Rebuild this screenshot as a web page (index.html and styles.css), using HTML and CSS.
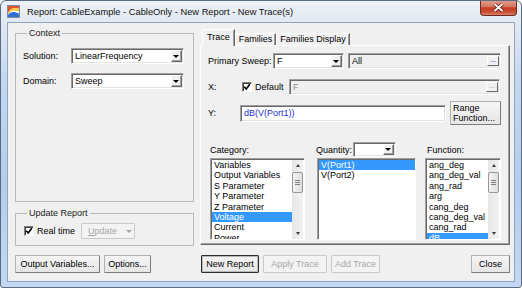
FILE: index.html
```html
<!DOCTYPE html>
<html lang="en">
<head>
    <meta charset="UTF-8">
    <title>Report: CableExample - CableOnly - New Report - New Trace(s)</title>
    <link rel="stylesheet" href="styles.css">
</head>
<body>
<div class="window">
    <div class="titlebar">
        <svg class="app-icon" width="13" height="13" viewBox="0 0 13 13">
            <rect x="0.5" y="0.5" width="12" height="12" fill="#fff" stroke="#7d8ea3"/>
            <path d="M1 8.5 C3 3.5 6 2 12 3.5 L12 1 L1 1 Z" fill="#e4502c"/>
            <path d="M1 10 C3 5.5 7 4.5 12 6.5 L12 3.5 C6 2 3 3.5 1 8.5 Z" fill="#f5c635"/>
            <path d="M1 12 L1 10 C3 6.5 7 6 12 8.5 L12 12 Z" fill="#2f6fd6"/>
        </svg>
        <span class="title">Report: CableExample - CableOnly - New Report - New Trace(s)</span>
        <div class="close-btn">
            <svg width="11" height="9" viewBox="0 0 11 9">
                <path d="M1.5 1 L9.5 8 M9.5 1 L1.5 8" stroke="#5a1d14" stroke-width="3.4"/>
                <path d="M1.5 1 L9.5 8 M9.5 1 L1.5 8" stroke="#fff" stroke-width="1.8"/>
            </svg>
        </div>
    </div>

    <div class="client">
        <!-- left side: context + update -->
        <div class="left-col">
            <fieldset class="group context">
                <legend>Context</legend>
                <div class="field-row">
                    <span class="lbl w-ctx">Solution:</span>
                    <div class="combo ctx-combo"><span class="combo-text">LinearFrequency</span><span class="combo-btn"></span></div>
                </div>
                <div class="field-row">
                    <span class="lbl w-ctx">Domain:</span>
                    <div class="combo ctx-combo"><span class="combo-text">Sweep</span><span class="combo-btn"></span></div>
                </div>
            </fieldset>

            <fieldset class="group update">
                <legend>Update Report</legend>
                <div class="field-row realtime-row">
                    <span class="check on"><svg width="8" height="8" viewBox="0 0 8 8"><polyline points="1.2,3.8 3.2,6 6.8,1.3" fill="none" stroke="#000" stroke-width="1.7"/></svg></span>
                    <span class="check-lbl w-real">Real time</span>
                    <div class="btn disabled update-btn"><span><u>U</u>pdate</span><span class="tri grey"></span></div>
                </div>
            </fieldset>

            <div class="btn-row">
                <button class="btn w-outvars">Output Variables...</button>
                <button class="btn w-options">Options...</button>
            </div>
        </div>

        <!-- right side: trace tabs -->
        <div class="right-col">
            <div class="tabs">
                <div class="tab active">Trace</div>
                <div class="tab">Families</div>
                <div class="tab">Families Display</div>
            </div>
            <div class="tab-panel">
                <div class="row sweep-row">
                    <span class="lbl w-sweep">Primary Sweep:</span>
                    <div class="combo sweep-combo"><span class="combo-text">F</span><span class="combo-btn"></span></div>
                    <div class="edit disabled all-field"><span class="edit-text">All</span><span class="dots-btn">...</span></div>
                </div>
                <div class="row x-row">
                    <span class="lbl w-x">X:</span>
                    <span class="check on"><svg width="8" height="8" viewBox="0 0 8 8"><polyline points="1.2,3.8 3.2,6 6.8,1.3" fill="none" stroke="#000" stroke-width="1.7"/></svg></span>
                    <span class="check-lbl w-default">Default</span>
                    <div class="edit disabled x-field"><span class="edit-text grey">F</span><span class="dots-btn off">...</span></div>
                </div>
                <div class="row y-row">
                    <span class="lbl w-y">Y:</span>
                    <div class="edit y-field"><span class="edit-text blue">dB(V(Port1))</span></div>
                    <button class="btn range-btn">Range<br>Function...</button>
                </div>

                <div class="lists">
                    <div class="list-col cat-col">
                        <div class="list-head">Category:</div>
                        <div class="listbox">
                            <ul class="items">
                                <li>Variables</li>
                                <li>Output Variables</li>
                                <li>S Parameter</li>
                                <li>Y Parameter</li>
                                <li>Z Parameter</li>
                                <li class="sel">Voltage</li>
                                <li>Current</li>
                                <li>Power</li>
                            </ul>
                            <div class="vscroll">
                                <div class="sb-arrow up"></div>
                                <div class="sb-track"><div class="thumb"></div></div>
                                <div class="sb-arrow down"></div>
                            </div>
                        </div>
                    </div>
                    <div class="list-col qty-col">
                        <div class="list-head">
                            <span class="w-qty">Quantity:</span>
                            <div class="combo qty-combo"><span class="combo-text"></span><span class="combo-btn"></span></div>
                        </div>
                        <div class="listbox">
                            <ul class="items">
                                <li class="sel">V(Port1)</li>
                                <li>V(Port2)</li>
                            </ul>
                        </div>
                    </div>
                    <div class="list-col fn-col">
                        <div class="list-head fn-head">Function:</div>
                        <div class="listbox">
                            <ul class="items">
                                <li>ang_deg</li>
                                <li>ang_deg_val</li>
                                <li>ang_rad</li>
                                <li>arg</li>
                                <li>cang_deg</li>
                                <li>cang_deg_val</li>
                                <li>cang_rad</li>
                                <li class="sel">dB</li>
                            </ul>
                            <div class="vscroll">
                                <div class="sb-arrow up"></div>
                                <div class="sb-track"><div class="thumb"></div></div>
                                <div class="sb-arrow down"></div>
                            </div>
                        </div>
                    </div>
                </div>
            </div>

            <div class="btn-row">
                <button class="btn default w-newrep">New Report</button>
                <button class="btn disabled w-apply">Apply Trace</button>
                <button class="btn disabled w-add">Add Trace</button>
                <button class="btn w-close">Close</button>
            </div>
        </div>
    </div>
</div>
</body>
</html>
```

FILE: styles.css
```css
* {
    margin: 0;
    padding: 0;
    box-sizing: border-box;
}

body {
    font-family: "Liberation Sans", Arial, sans-serif;
    font-size: 9px;
    color: #000;
    background: #fff;
}

.window {
    width: 522px;
    height: 288px;
    border: 1px solid #5b6b80;
    border-radius: 6px 6px 3px 3px;
    background: linear-gradient(#eef1f6 0, #e2e9f2 20px, #c3d7f0 80px, #b4cdee 180px, #c2d8f3 288px);
    display: flex;
    flex-direction: column;
    overflow: hidden;
}

/* title bar */
.titlebar {
    height: 21px;
    display: flex;
    align-items: center;
}

.app-icon {
    margin-left: 6px;
    flex: none;
}

.title {
    margin-left: 7px;
    font-size: 9.3px;
    color: #111;
    white-space: nowrap;
}

.close-btn {
    width: 37px;
    height: 16px;
    margin: -1px 4px 0 auto;
    align-self: flex-start;
    border: 1px solid #6b2a22;
    border-top: none;
    border-radius: 0 0 4px 4px;
    background: linear-gradient(#e3a293 0, #d6755f 45%, #c23d23 52%, #c84e34 80%, #da866c 100%);
    display: flex;
    align-items: center;
    justify-content: center;
}

/* client area */
.client {
    margin: 0 6px;
    height: 260px;
    border: 1px solid #92a4ba;
    background: #f0f0f0;
    display: flex;
    padding-left: 7px;
}

.left-col {
    width: 179px;
    padding-top: 5px;
    display: flex;
    flex-direction: column;
}

.right-col {
    width: 310px;
    margin-left: 6px;
    padding-top: 6px;
    display: flex;
    flex-direction: column;
}

/* group boxes */
.group {
    border: 1px solid #b9b9b9;
    padding: 0 8px 0 7px;
    min-width: 0;
}

.group legend {
    margin-left: 4px;
    padding: 0 2px;
    line-height: 11px;
    color: #1a1a1a;
}

.context {
    height: 174px;
}

.update {
    height: 38px;
    margin-top: 6px;
}

.field-row {
    display: flex;
    align-items: center;
    height: 16px;
    margin-top: 9px;
}

.realtime-row {
    margin-top: 4px;
    padding-left: 1px;
}

.lbl {
    flex: none;
    white-space: nowrap;
}

.w-ctx { width: 48px; }
.ctx-combo { width: 113px; }

/* combo boxes and edits */
.combo, .edit {
    display: flex;
    align-items: center;
    height: 16px;
    background: #fff;
    border: 1px solid;
    border-color: #a0a0a0 #fff #fff #a0a0a0;
    box-shadow: inset 1px 1px 0 #696969, inset -1px -1px 0 #e3e3e3;
    flex: none;
}

.combo-text, .edit-text {
    flex: 1;
    padding-left: 3px;
    white-space: nowrap;
    overflow: hidden;
}

.combo-btn {
    width: 11px;
    height: 12px;
    margin-right: 1px;
    background: #f0f0f0;
    border: 1px solid;
    border-color: #fff #696969 #696969 #fff;
    box-shadow: inset -1px -1px 0 #a0a0a0;
    display: flex;
    align-items: center;
    justify-content: center;
}

.combo-btn::after {
    content: "";
    border-left: 3px solid transparent;
    border-right: 3px solid transparent;
    border-top: 3px solid #000;
    margin: 1px 1px 0 0;
}

.edit.disabled {
    background: #f0f0f0;
}

.edit-text.grey { color: #8a8a8a; }
.edit-text.blue { color: #2b2bd0; }

.dots-btn {
    width: 12px;
    height: 10px;
    margin-right: 1px;
    background: #f0f0f0;
    border: 1px solid;
    border-color: #fff #696969 #696969 #fff;
    font-size: 8px;
    line-height: 5px;
    text-align: center;
    color: #3b3bb0;
    letter-spacing: -0.5px;
}

.dots-btn.off { color: #a0a0a0; }

/* checkboxes */
.check {
    width: 10px;
    height: 10px;
    flex: none;
    background: #fff;
    border: 1px solid;
    border-color: #808080 #fff #fff #808080;
    box-shadow: inset 1px 1px 0 #404040;
    display: flex;
    align-items: center;
    justify-content: center;
}

.check-lbl {
    margin-left: 3px;
    white-space: nowrap;
}

.w-real { width: 44px; }
.w-default { width: 34px; }

/* buttons */
.btn {
    height: 18px;
    font: inherit;
    color: #000;
    background: linear-gradient(#f5f5f5, #e6e6e6);
    border: 1px solid;
    border-color: #b0b0b0 #7c7c7c #7c7c7c #b0b0b0;
    border-radius: 1px;
    text-align: center;
    white-space: nowrap;
    flex: none;
}

.btn.disabled {
    color: #a6a6a6;
    background: #f3f3f3;
    border-color: #c9c9c9;
}

.btn.default {
    border-color: #2e2e2e;
    box-shadow: inset 0 0 0 1px #b8b8b8;
}

.btn-row {
    display: flex;
    gap: 4px;
    margin-top: 9px;
}

.right-col .btn-row {
    margin-top: 10px;
    padding-left: 1px;
}

.w-outvars { width: 85px; }
.w-options { width: 47px; }
.w-newrep { width: 58px; }
.w-apply { width: 64px; }
.w-add { width: 49px; }
.w-close { width: 39px; margin-left: auto; }

.update-btn {
    width: 54px;
    height: 16px;
    display: flex;
    align-items: center;
    padding-left: 6px;
    gap: 9px;
}

.tri {
    border-left: 3px solid transparent;
    border-right: 3px solid transparent;
    border-top: 3px solid #000;
}

.tri.grey { border-top-color: #a6a6a6; }

/* tabs */
.tabs {
    display: flex;
    align-items: flex-end;
    height: 17px;
    margin-bottom: -1px;
    padding-left: 2px;
}

.tab {
    height: 12px;
    margin-bottom: 1px;
    line-height: 11px;
    padding: 0 3px 0 3px;
    border: 1px solid;
    border-bottom: none;
    border-color: #fff #696969 #fff #fff;
    box-shadow: inset -1px 0 0 #a0a0a0;
    background: #f0f0f0;
    white-space: nowrap;
}

.tab.active {
    height: 17px;
    margin-bottom: 0;
    line-height: 14px;
    padding: 0 4px;
    position: relative;
    z-index: 1;
}

.tab-panel {
    height: 200px;
    border: 1px solid;
    border-color: #fff #696969 #696969 #fff;
    box-shadow: inset -1px -1px 0 #a0a0a0;
    padding: 0 8px 0 7px;
}

.row {
    display: flex;
    align-items: center;
}

.sweep-row { height: 16px; margin-top: 7px; }
.x-row { height: 16px; margin-top: 10px; }
.y-row { height: 24px; margin-top: 6px; }

.w-sweep { width: 65px; }
.sweep-combo { width: 71px; }
.all-field { width: 153px; margin-left: 4px; }

.w-x { width: 34px; }
.x-field { width: 211px; }

.w-y { width: 32px; }
.y-field { width: 206px; height: 17px; }

.range-btn {
    width: 51px;
    height: 24px;
    margin-left: 4px;
    line-height: 10px;
    text-align: left;
    padding-left: 2px;
}

/* lists */
.lists {
    display: flex;
    margin-top: 16px;
    padding-left: 2px;
}

.list-col {
    display: flex;
    flex-direction: column;
}

.cat-col { width: 95px; }
.qty-col { width: 99px; margin-left: 12px; }
.fn-col { width: 76px; margin-left: 9px; }

.list-head {
    height: 16px;
    display: flex;
    align-items: center;
    white-space: nowrap;
    padding-top: 2px;
}

.fn-head { padding-left: 2px; }

.w-qty { width: 37px; margin-left: -1px; }
.qty-combo { width: 43px; height: 15px; margin-top: -2px; }
.qty-combo .combo-btn { height: 11px; }

.listbox {
    height: 82px;
    margin-top: 1px;
    display: flex;
    background: #fff;
    border: 1px solid;
    border-color: #a0a0a0 #fff #fff #a0a0a0;
    box-shadow: inset 1px 1px 0 #696969;
    overflow: hidden;
}

.items {
    list-style: none;
    flex: 1;
    padding: 1px 0 0 1px;
    overflow: hidden;
}

.items li {
    height: 10.4px;
    line-height: 10.4px;
    padding-left: 2px;
    white-space: nowrap;
}

.items li.sel {
    background: #3399ff;
    color: #fff;
}

.vscroll {
    width: 11px;
    margin: 1px 1px 0 0;
    display: flex;
    flex-direction: column;
    background: linear-gradient(90deg, #e6e6e6, #f2f2f2);
}

.sb-arrow {
    height: 11px;
    display: flex;
    align-items: center;
    justify-content: center;
}

.sb-arrow::after {
    content: "";
    border-left: 2.5px solid transparent;
    border-right: 2.5px solid transparent;
}

.sb-arrow.up::after { border-bottom: 3px solid #3c3c3c; }
.sb-arrow.down::after { border-top: 3px solid #3c3c3c; }

.sb-track {
    flex: 1;
}

.thumb {
    height: 21px;
    margin: 1px 0 0 0;
    border: 1px solid #979797;
    border-radius: 2px;
    background: linear-gradient(90deg, #f3f3f3, #dedede);
    display: flex;
    align-items: center;
    justify-content: center;
}

.thumb::after {
    content: "";
    width: 5px;
    height: 5px;
    background: repeating-linear-gradient(#808080 0 1px, transparent 1px 2px);
}
```
